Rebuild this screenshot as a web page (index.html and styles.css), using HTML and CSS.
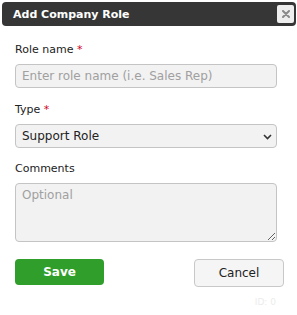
FILE: index.html
```html
<!DOCTYPE html>
<html lang="en">
<head>
    <meta charset="UTF-8">
    <title>Add Company Role</title>
    <link rel="stylesheet" href="styles.css">
</head>
<body>

<div class="dialog">
    <div class="dialog-title">
        <span>Add Company Role</span>
        <button type="button" class="close-btn" aria-label="Close">
            <svg width="8" height="8" viewBox="0 0 8 8"><path d="M1 1L7 7M7 1L1 7" stroke="#8a8a8a" stroke-width="2" stroke-linecap="round"/></svg>
        </button>
    </div>

    <form class="role-form">
        <label for="role-name">Role name <span class="req">*</span></label>
        <input type="text" id="role-name" placeholder="Enter role name (i.e. Sales Rep)">

        <label for="role-type">Type <span class="req">*</span></label>
        <div class="select-wrap">
            <select id="role-type">
                <option>Support Role</option>
                <option>Sales Role</option>
            </select>
            <svg class="chevron" width="9" height="6" viewBox="0 0 9 6"><path d="M1 1L4.5 4.5L8 1" fill="none" stroke="#333" stroke-width="1.6"/></svg>
        </div>

        <label for="comments">Comments</label>
        <textarea id="comments" placeholder="Optional"></textarea>

        <div class="actions">
            <button type="submit" class="btn-save">Save</button>
            <button type="button" class="btn-cancel">Cancel</button>
        </div>
        <div class="role-id">ID: 0</div>
    </form>
</div>

</body>
</html>
```

FILE: styles.css
```css
body {
    margin: 0;
    padding: 2px 1px 0 2px;
    background-color: #fff;
    font-family: "DejaVu Sans", Verdana, sans-serif;
    font-size: 11px;
    color: #222;
}
.dialog-title {
    height: 24px;
    background-color: #363636;
    color: #fff;
    border-radius: 4px;
    display: flex;
    align-items: center;
    justify-content: space-between;
    padding: 0 2px 0 11px;
    font-weight: bold;
    font-size: 11px;
}
.close-btn {
    width: 17px;
    height: 18px;
    padding: 0;
    border: none;
    border-radius: 2px;
    background-color: #eee;
    display: flex;
    align-items: center;
    justify-content: center;
}
.role-form {
    padding: 17px 13px 0 13px;
    display: flex;
    flex-direction: column;
}
.role-form label {
    display: block;
    margin-bottom: 8px;
    line-height: 13px;
}
.req {
    color: #d0021b;
}
.role-form input,
.role-form select,
.role-form textarea {
    display: block;
    box-sizing: border-box;
    width: 262px;
    border: 1px solid #c4c4c4;
    border-radius: 4px;
    background-color: #f2f2f2;
    font-family: "DejaVu Sans", Verdana, sans-serif;
    font-size: 12px;
    color: #222;
    margin: 0 0 15px 0;
}
.role-form input {
    height: 24px;
    padding: 0 6px;
}
.role-form input::placeholder,
.role-form textarea::placeholder {
    color: #a0a0a0;
}
.select-wrap {
    position: relative;
    width: 262px;
}
.role-form select {
    height: 24px;
    padding: 0 6px;
    margin-bottom: 14px;
    appearance: none;
    -webkit-appearance: none;
}
.chevron {
    position: absolute;
    right: 5px;
    top: 10px;
    pointer-events: none;
}
.role-form textarea {
    height: 59px;
    padding: 4px 6px;
    margin-bottom: 17px;
}
.actions {
    display: flex;
    justify-content: space-between;
    align-items: flex-start;
    width: 269px;
}
.btn-save {
    width: 89px;
    height: 26px;
    border: none;
    border-radius: 4px;
    background-color: #2f9e2a;
    color: #fff;
    font-family: "DejaVu Sans", Verdana, sans-serif;
    font-weight: bold;
    font-size: 12px;
}
.btn-cancel {
    width: 90px;
    height: 28px;
    border: 1px solid #c8c8c8;
    border-radius: 4px;
    background-color: #f5f5f5;
    color: #222;
    font-family: "DejaVu Sans", Verdana, sans-serif;
    font-size: 12px;
}
.role-id {
    align-self: flex-end;
    margin: 10px 7px 0 0;
    font-size: 9px;
    color: #ececec;
}
```
